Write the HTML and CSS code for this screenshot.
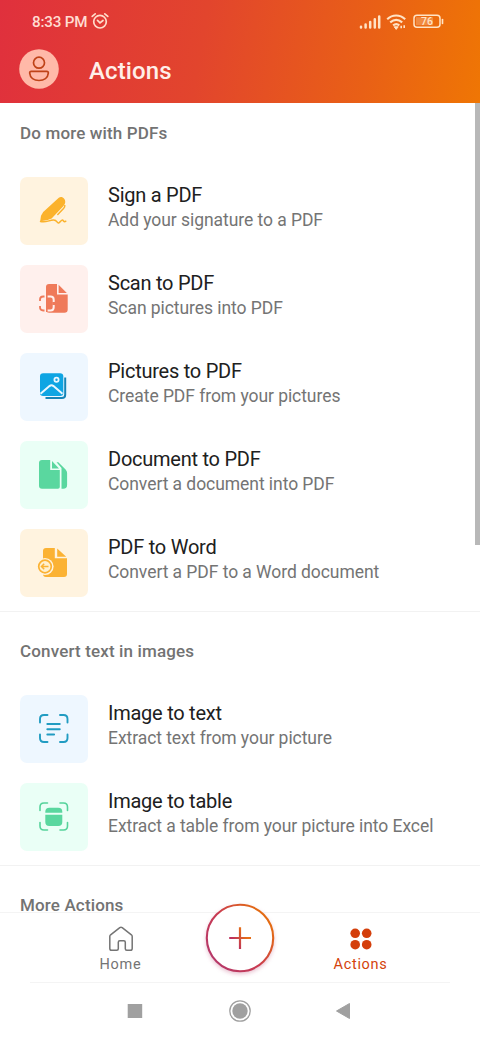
FILE: index.html
```html
<!DOCTYPE html>
<html lang="en">
<head>
<meta charset="utf-8">
<title>Actions</title>
<link rel="stylesheet" href="styles.css">
</head>
<body>
<div class="screen">
  <header class="header">
    <div class="status">
      <span class="clock">8:33 PM</span>
      <svg class="alarm" width="18" height="18" viewBox="0 0 18 18" fill="none" stroke="#ffdcca" stroke-width="1.7" stroke-linecap="round"><circle cx="9" cy="9.7" r="6.3"/><path d="M1.2 4.4 4.2 1.8M16.8 4.4 13.8 1.8M6.5 8.4 9 10.8l3-2.3"/></svg>
      <svg class="signals" width="86" height="18" viewBox="0 0 86 18" fill="none" stroke="#ffe3c5">
        <path d="M2 15.6v-.8M6.6 15.6v-3M11.2 15.6V10M15.8 15.6V7.2M20.2 15.6V4.4" stroke-width="2.5" stroke-linecap="round"/>
        <path d="M28.2 7.2c5.3-5 12.6-5 18 0M31.2 10.4c3.7-3.2 8.3-3.2 12 0M34.1 13.4c2-1.6 4.3-1.6 6.2 0" stroke-width="2.1"/>
        <path d="m35.2 14.8 2 2.6 2-2.6z" fill="#ffe3c5"/>
        <path d="M42.2 16.3v-2.5M45.2 13.2v2.8" stroke-width="1.6"/>
        <rect x="55" y="3.2" width="26" height="12" rx="3" stroke-width="1.5"/>
        <path d="M83.5 7.5v4" stroke-width="1.6" stroke-linecap="round"/>
        <rect x="57" y="5.2" width="17" height="8" fill="#ffe3c5" stroke="none" opacity=".28"/>
        <text class="battery" x="68" y="13.1" text-anchor="middle">76</text>
      </svg>
    </div>
    <div class="titlebar">
      <svg class="avatar" width="40" height="40" viewBox="0 0 40 40"><circle cx="20" cy="20" r="19.8" fill="#ffb9a8"/><g fill="none" stroke="#bf4318" stroke-width="1.7"><circle cx="20" cy="13.7" r="5.5"/><path d="M12.3 22.4h15.4c1.2 0 1.7.6 1.6 1.7-.4 4.7-4.3 7.4-9.3 7.4s-8.9-2.7-9.3-7.4c-.1-1.1.4-1.7 1.6-1.7z"/></g></svg>
      <h1>Actions</h1>
    </div>
  </header>
  <main class="content">
    <section class="group first">
      <h2>Do more with PDFs</h2>
      <ul>
        <li><svg class="tile cream" viewBox="0 0 68 68"><path d="m20.2 44.2.8-5.4 2.2-3.8 15.6-14.2c3-2.2 7 1 6.4 4.800-.2 1.400-.9 2.300-1.700 3.300L31.600 41.600l-4.600 1.600z" fill="#fbb22c"/><path d="M44.800 28.600c.1 1.200-.4 2-1.300 3l-5.700 5.900M20.500 44.500c5 1.400 8.500-1.200 12.700-1.600 4.400-.4 3.400 4.200 5.800 2.900 2-1.200 2.800-4.200 4.500-1.800.7.900 1.500.8 2.300.2" fill="none" stroke="#fbb22c" stroke-width="1.500" stroke-linecap="round"/></svg>
          <div><h3>Sign a PDF</h3><p>Add your signature to a PDF</p></div></li>
        <li><svg class="tile rose" viewBox="0 0 68 68"><path d="M29 19h8v10.500h10.700V44.500q0 3.300-3.300 3.300H29.300q-3.300 0-3.300-3.300V22q0-3 3-3z" fill="#ef7a5a"/><path d="m38.600 19.800 8.200 8.200h-8.200z" fill="#ef7a5a"/><path d="M26 31.500h4.500q3.200 0 3.200 3.200v7.600q0 3.200-3.200 3.200H26" fill="none" stroke="#fff0ed" stroke-width="2"/><path d="M20 36v-1.300q0-3.200 3.200-3.200h1.300M20 41v1.300q0 3.200 3.200 3.200h1.300" fill="none" stroke="#ef7a5a" stroke-width="1.800"/><path d="M26 30h1.600v3.500H26zM26 43.500h1.600V47H26zM32.300 37h3v3h-3z" fill="#ef7a5a"/></svg>
          <div><h3>Scan to PDF</h3><p>Scan pictures into PDF</p></div></li>
        <li><svg class="tile blue" viewBox="0 0 68 68"><path d="M45.200 24.500v17.200q0 3.300-3.300 3.300H25.500" fill="none" stroke="#1685b7" stroke-width="2"/><rect x="20" y="20.300" width="23.300" height="22.700" rx="3.200" fill="#0ea5e3"/><path d="m20.500 40.700 9-7.600q2-1.600 4 0l9 7.600" fill="none" stroke="#eaf7ff" stroke-width="2"/><circle cx="36.500" cy="26.800" r="2.100" fill="#13a2df" stroke="#eaf7ff" stroke-width="1.800"/></svg>
          <div><h3>Pictures to PDF</h3><p>Create PDF from your pictures</p></div></li>
        <li><svg class="tile mint" viewBox="0 0 68 68"><path d="M22 19h8.200v10h9.600v17q0 1.800-1.800 1.800H22q-3 0-3-3V22q0-3 3-3z" fill="#5ad79f"/><path d="m32 20 7 7.600h-7zM36.500 21.200h1.800l7.300 7.200q1.500 1.600 1.500 3.600v12q0 3.800-3.800 3.800h-1.800V27z" fill="#5ad79f"/></svg>
          <div><h3>Document to PDF</h3><p>Convert a document into PDF</p></div></li>
        <li><svg class="tile cream" viewBox="0 0 68 68"><path d="M26 19h8.800v10.300H47V45q0 3-3 3H26q-3 0-3-3V22q0-3 3-3zM37.200 19.500l9 8.200h-9z" fill="#fbb234"/><circle cx="25" cy="37.500" r="8.600" fill="#fff3df"/><circle cx="25" cy="37.500" r="6.300" fill="#fff0cf" stroke="#fbb234" stroke-width="1.700"/><path d="M28.500 37.500h-7m2.700-2.700-2.700 2.700 2.700 2.700" fill="none" stroke="#fbb234" stroke-width="1.500"/></svg>
          <div><h3>PDF to Word</h3><p>Convert a PDF to a Word document</p></div></li>
      </ul>
    </section>
    <section class="group">
      <h2>Convert text in images</h2>
      <ul>
        <li><svg class="tile blue" viewBox="0 0 68 68"><path d="M20 27.500V24q0-4 4-4h3.500M40 20h3.500q4 0 4 4v3.500M20 39.500V43q0 4 4 4h3.500M40 47h3.500q4 0 4-4v-3.500M27.300 29h12.500M27.300 34.200h12.500M27.300 39.500h6.800" fill="none" stroke="#219cc2" stroke-width="1.900" stroke-linecap="round"/></svg>
          <div><h3>Image to text</h3><p>Extract text from your picture</p></div></li>
        <li><svg class="tile mint" viewBox="0 0 68 68"><path d="M20 27.500V24q0-4 4-4h3.500M40 20h3.500q4 0 4 4v3.500M20 39.500V43q0 4 4 4h3.500M40 47h3.500q4 0 4-4v-3.500" fill="none" stroke="#55d39b" stroke-width="1.600" stroke-linecap="round"/><path d="M25.300 29.700v-1q0-4 4-4h9q4 0 4 4v1zM25.300 31.800h17V39q0 4-4 4h-9q-4 0-4-4z" fill="#5ad79f"/></svg>
          <div><h3>Image to table</h3><p>Extract a table from your picture into Excel</p></div></li>
      </ul>
    </section>
    <section class="group last"><h2>More Actions</h2></section>
    <div class="scrollbar"></div>
  </main>
  <nav class="tabs">
    <div class="tab"><svg width="28" height="28" viewBox="0 0 28 28" fill="none" stroke="#747474" stroke-width="1.500" stroke-linejoin="round"><path d="M2.800 11.500q0-1 .8-1.700l9.200-7.200q1.200-.8 2.400 0l9.200 7.200q.8.700.8 1.700v12q0 1.800-1.800 1.800h-3.600q-1.500 0-1.500-1.500v-6.500q0-1.500-1.500-1.500h-4q-1.500 0-1.500 1.500v6.500q0 1.500-1.500 1.500H4.600q-1.800 0-1.800-1.800z"/></svg><span>Home</span></div>
    <svg class="add" width="80" height="80" viewBox="0 0 80 80" fill="none">
      <defs><linearGradient id="ring" x1="12" y1="60" x2="65" y2="20" gradientUnits="userSpaceOnUse"><stop stop-color="#b63868"/><stop offset=".48" stop-color="#c93b51"/><stop offset="1" stop-color="#e36b13"/></linearGradient><linearGradient id="plus" x1="34" y1="43" x2="45" y2="36" gradientUnits="userSpaceOnUse"><stop stop-color="#bd315d"/><stop offset="1" stop-color="#e66f17"/></linearGradient></defs>
      <circle class="disc" cx="40" cy="40" r="34" fill="#fff"/><circle cx="40" cy="40" r="33.200" stroke="url(#ring)" stroke-width="2.100"/><path d="M29.200 40H51M40 29.200V51" stroke="url(#plus)" stroke-width="2.200"/></svg>
    <div class="tab active"><svg width="28" height="28" viewBox="0 0 28 28" fill="#d43f0b"><circle cx="8.200" cy="8.300" r="4.800"/><circle cx="19.700" cy="8.300" r="4.800"/><circle cx="8.200" cy="19.700" r="4.800"/><circle cx="19.700" cy="19.700" r="4.800"/></svg><span>Actions</span></div>
  </nav>
  <footer class="system">
    <svg width="24" height="24" viewBox="0 0 24 24"><path d="M4.700 5h14.500v14H4.700z" fill="#a0a0a0"/></svg>
    <svg class="home-key" width="24" height="24" viewBox="0 0 24 24"><circle cx="12" cy="12" r="10.200" fill="none" stroke="#a0a0a0" stroke-width="1.300"/><circle cx="12" cy="12" r="7.700" fill="#a0a0a0"/></svg>
    <svg width="24" height="24" viewBox="0 0 24 24"><path d="M5.500 12 18.500 4.500v15z" fill="#a0a0a0" stroke="#a0a0a0" stroke-linejoin="round"/></svg>
  </footer>
</div>
</body>
</html>
```

FILE: styles.css
```css
* { box-sizing: border-box; margin: 0; padding: 0; }
body { font-family: Roboto, sans-serif; background: #fff; }
svg { display: block; flex: none; }
.screen { display: flex; flex-direction: column; width: 480px; height: 1040px; }
.header { height: 103px; flex: none; background: linear-gradient(100deg, #e0303d 0%, #e2452d 42%, #e96016 76%, #ef7604 100%); }
.status { display: flex; align-items: center; height: 42px; padding: 0 35px 0 32px; }
.clock { width: 59px; color: #ffdcd2; font-size: 15.2px; font-weight: 500; letter-spacing: -.2px; white-space: nowrap; padding-top: 1px; }
.signals { margin-left: auto; }
.battery { font-size: 10.5px; font-weight: 500; fill: #ffe3c5; stroke: none; }
.titlebar { display: flex; align-items: center; gap: 30px; height: 54px; padding-left: 19px; }
h1 { color: #ffefe9; font-size: 24px; font-weight: 500; line-height: 30px; padding-top: 3px; letter-spacing: .1px; }
.content { position: relative; height: 809px; flex: none; }
.group { height: 254px; padding: 29px 0 0 20px; border-bottom: 1px solid #f2f2f2; }
.group.first { height: 509px; padding-top: 19.5px; }
.group.last { height: 50px; border: 0; }
h2 { height: 20px; margin-bottom: 34px; color: #737373; font-size: 17px; font-weight: 500; line-height: 20px; letter-spacing: .15px; }
ul { list-style: none; display: flex; flex-direction: column; gap: 20px; }
li { display: flex; gap: 20px; height: 68px; }
.tile { width: 68px; height: 68px; border-radius: 7px; }
.cream { background: #fff3df; }
.rose { background: #fff0ed; }
.blue { background: #eef7ff; }
.mint { background: #eafff6; }
h3 { margin-top: 5px; color: #202020; font-size: 20px; font-weight: 400; line-height: 26px; letter-spacing: -.25px; }
p { color: #747474; font-size: 17.5px; line-height: 22px; letter-spacing: -.06px; margin-top: 1px; }
.scrollbar { position: absolute; right: 0; top: 0; width: 5px; height: 442px; background: #b8b8b8; }
.tabs { display: flex; justify-content: center; align-items: flex-start; gap: 40px; height: 71px; flex: none; border-top: 1px solid #f4f4f4; }
.tab { display: flex; flex-direction: column; align-items: center; width: 100px; padding: 12px 0 0 1px; color: #747474; font-size: 14.5px; letter-spacing: .7px; }
.tab span { line-height: 18px; margin-top: 3px; }
.active { color: #d4430c; }
.add { margin: -15px -10px 0; z-index: 1; }
.disc { filter: drop-shadow(0 2px 2px #b6386855); }
.system { display: flex; justify-content: space-between; width: 420px; height: 58px; margin: -1px auto 0; padding: 16px 95px 0 93px; border-top: 1px solid #f4f4f4; }
.home-key { margin-left: 2px; }
```
